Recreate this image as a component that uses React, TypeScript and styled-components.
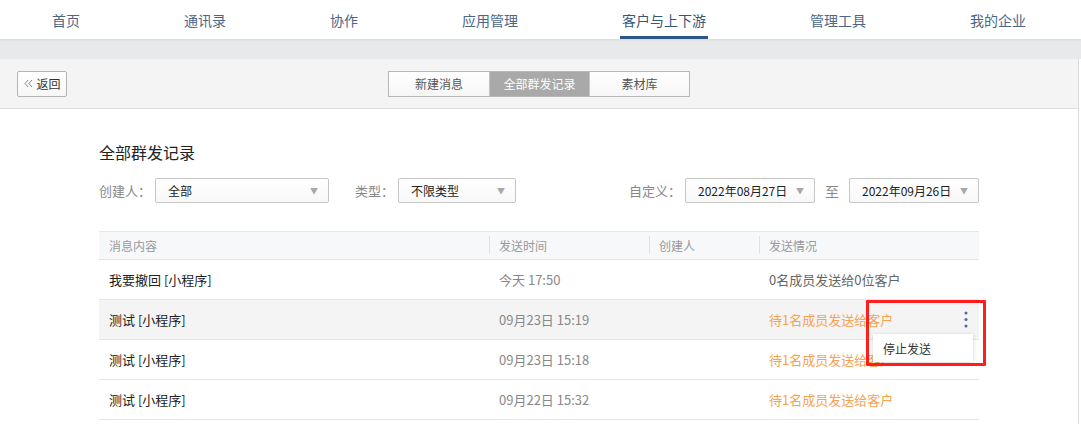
import React from "react";
import styled, { createGlobalStyle } from "styled-components";

const GlobalStyle = createGlobalStyle`
  html, body { margin: 0; padding: 0; background: #fff; }
  body {
    font-family: "Microsoft YaHei", "Noto Sans CJK SC", "Noto Sans", sans-serif;
    color: #333;
    -webkit-font-smoothing: antialiased;
  }
  * { box-sizing: border-box; }
`;

const NavBar = styled.nav`
  display: flex;
  height: 39px;
  padding-left: 50px;
  gap: 100px;
  background: #fff;
  position: relative;
  z-index: 1;
  box-shadow: 0 1px 2px rgba(0, 0, 0, 0.08);
`;

const NavItem = styled.div<{ $active?: boolean }>`
  height: 39px;
  padding: 3px 2px 0;
  display: flex;
  align-items: center;
  font-size: 14px;
  color: ${(p) => (p.$active ? "#35557d" : "#4b6689")};
  border-bottom: 3px solid ${(p) => (p.$active ? "#2c5887" : "transparent")};
  white-space: nowrap;
`;

const GrayBand = styled.div`
  height: 20px;
  background: #e8e9eb;
`;

const Card = styled.div`
  width: 1079px;
  border-right: 1px solid #dcdcdc;
  background: #fff;
  min-height: 365px;
`;

const CardHeader = styled.div`
  height: 50px;
  display: grid;
  grid-template-columns: 1fr auto 1fr;
  align-items: center;
  padding: 0 17px;
  background: #f4f4f4;
  border-bottom: 1px solid #e0e0e0;
`;

const BackButton = styled.button`
  justify-self: start;
  width: 50px;
  height: 26px;
  display: flex;
  align-items: center;
  justify-content: center;
  gap: 3px;
  padding: 0 0 0 1px;
  border: 1px solid #b4b4b4;
  border-radius: 2px;
  background: linear-gradient(#ffffff, #f7f7f7);
  font-family: inherit;
  font-size: 12px;
  color: #333;
`;

const Tabs = styled.div`
  display: flex;
  border: 1px solid #b8b8b8;
  height: 26px;
`;

const Tab = styled.div<{ $active?: boolean; $sep?: boolean }>`
  width: 100px;
  height: 24px;
  display: flex;
  align-items: center;
  justify-content: center;
  font-size: 12px;
  color: ${(p) => (p.$active ? "#fff" : "#555")};
  background: ${(p) => (p.$active ? "#a9a9a9" : "linear-gradient(#ffffff, #f6f6f6)")};
  border-left: ${(p) => (p.$sep ? "1px solid #c4c4c4" : "none")};
`;

const Body = styled.div`
  padding: 32px 0 0 99px;
`;

const Title = styled.h2`
  margin: 0;
  font-size: 16px;
  line-height: 22px;
  font-weight: normal;
  color: #222;
`;

const FilterRow = styled.div`
  width: 880px;
  margin-top: 15px;
  display: flex;
  align-items: center;
  height: 25px;
`;

const FilterGroup = styled.div<{ $push?: boolean; $gapLeft?: number }>`
  display: flex;
  align-items: center;
  margin-left: ${(p) => (p.$push ? "auto" : `${p.$gapLeft ?? 0}px`)};
`;

const Label = styled.span`
  font-size: 13px;
  color: #888;
  margin-right: 4px;
  white-space: nowrap;
`;

const To = styled.span`
  font-size: 14px;
  color: #888;
  margin: 0 10px;
`;

const Select = styled.div<{ $w: number }>`
  width: ${(p) => p.$w}px;
  height: 25px;
  display: flex;
  align-items: center;
  padding: 0 10px 0 12px;
  border: 1px solid #c6c6c6;
  border-radius: 2px;
  background: linear-gradient(#ffffff, #f8f8f8);
  font-size: 12px;
  color: #222;
  white-space: nowrap;
`;

const Arrow = styled.span`
  margin-left: auto;
  font-size: 8px;
  color: #a8a8a8;
`;

const Table = styled.div`
  width: 880px;
  margin-top: 28px;
  border-top: 1px solid #e6e6e6;
`;

const HeadRow = styled.div`
  display: grid;
  grid-template-columns: 390px 160px 110px 220px;
  height: 28px;
  background: #f7f8fa;
  border-bottom: 1px solid #e4e4e4;
`;

const HeadCell = styled.div<{ $sep?: boolean }>`
  position: relative;
  display: flex;
  align-items: center;
  padding-left: 10px;
  font-size: 12px;
  color: #999;
  &::before {
    content: "";
    display: ${(p) => (p.$sep ? "block" : "none")};
    position: absolute;
    left: 0;
    top: 4px;
    bottom: 5px;
    width: 1px;
    background: #e2e2e2;
  }
`;

const Row = styled.div<{ $hover?: boolean }>`
  display: grid;
  grid-template-columns: 390px 160px 110px 220px;
  height: 40px;
  border-bottom: 1px solid #e6e6e6;
  background: ${(p) => (p.$hover ? "#f4f4f4" : "#fff")};
  position: relative;
  z-index: ${(p) => (p.$hover ? 2 : 1)};
`;

const Cell = styled.div<{ $tone?: "main" | "muted" | "plain" | "warn" }>`
  position: relative;
  display: flex;
  align-items: center;
  padding-left: 10px;
  font-size: 13px;
  white-space: nowrap;
  color: ${(p) =>
    p.$tone === "muted"
      ? "#888"
      : p.$tone === "plain"
      ? "#666"
      : p.$tone === "warn"
      ? "#f7a24e"
      : "#222"};
`;

const MoreButton = styled.span`
  margin-left: auto;
  margin-right: 11px;
  display: flex;
  align-items: center;
`;

const Menu = styled.div`
  position: absolute;
  left: 114px;
  top: 34px;
  width: 100px;
  height: 28px;
  display: flex;
  align-items: center;
  padding-left: 10px;
  background: #fff;
  font-size: 12px;
  color: #333;
  box-shadow: 0 1px 4px rgba(0, 0, 0, 0.18);
  z-index: 3;
`;

const Highlight = styled.div`
  position: absolute;
  left: 107px;
  top: 0;
  width: 120px;
  height: 66px;
  border: 3px solid #ff1d1d;
  border-radius: 1px;
  pointer-events: none;
  z-index: 4;
`;

const Chevrons = () => (
  <svg width="9" height="9" viewBox="0 0 9 9" fill="none" stroke="#777" strokeWidth="0.9">
    <polyline points="4.2,1 1,4.5 4.2,8" />
    <polyline points="8,1 4.8,4.5 8,8" />
  </svg>
);

const Dots = () => (
  <svg width="4" height="17" viewBox="0 0 4 17" fill="#3f6ea6">
    <circle cx="2" cy="2" r="1.5" />
    <circle cx="2" cy="8.5" r="1.5" />
    <circle cx="2" cy="15" r="1.5" />
  </svg>
);

const navItems = ["首页", "通讯录", "协作", "应用管理", "客户与上下游", "管理工具", "我的企业"];

type Rec = { content: string; time: string; status: string; pending: boolean; hover?: boolean };
const records: Rec[] = [
  { content: "我要撤回 [小程序]", time: "今天 17:50", status: "0名成员发送给0位客户", pending: false },
  { content: "测试 [小程序]", time: "09月23日 15:19", status: "待1名成员发送给客户", pending: true, hover: true },
  { content: "测试 [小程序]", time: "09月23日 15:18", status: "待1名成员发送给客户", pending: true },
  { content: "测试 [小程序]", time: "09月22日 15:32", status: "待1名成员发送给客户", pending: true },
];

export default function App() {
  return (
    <>
      <GlobalStyle />
      <NavBar>
        {navItems.map((n) => (
          <NavItem key={n} $active={n === "客户与上下游"}>
            {n}
          </NavItem>
        ))}
      </NavBar>
      <GrayBand />
      <Card>
        <CardHeader>
          <BackButton>
            <Chevrons />
            返回
          </BackButton>
          <Tabs>
            <Tab>新建消息</Tab>
            <Tab $active $sep>
              全部群发记录
            </Tab>
            <Tab $sep>素材库</Tab>
          </Tabs>
          <div />
        </CardHeader>
        <Body>
          <Title>全部群发记录</Title>
          <FilterRow>
            <FilterGroup>
              <Label>创建人：</Label>
              <Select $w={174}>
                全部<Arrow>▼</Arrow>
              </Select>
            </FilterGroup>
            <FilterGroup $gapLeft={26}>
              <Label>类型：</Label>
              <Select $w={118}>
                不限类型<Arrow>▼</Arrow>
              </Select>
            </FilterGroup>
            <FilterGroup $push>
              <Label>自定义：</Label>
              <Select $w={130}>
                2022年08月27日<Arrow>▼</Arrow>
              </Select>
              <To>至</To>
              <Select $w={130}>
                2022年09月26日<Arrow>▼</Arrow>
              </Select>
            </FilterGroup>
          </FilterRow>
          <Table>
            <HeadRow>
              <HeadCell>消息内容</HeadCell>
              <HeadCell $sep>发送时间</HeadCell>
              <HeadCell $sep>创建人</HeadCell>
              <HeadCell $sep>发送情况</HeadCell>
            </HeadRow>
            {records.map((r, i) => (
              <Row key={i} $hover={r.hover}>
                <Cell $tone="main">{r.content}</Cell>
                <Cell $tone="muted">{r.time}</Cell>
                <Cell />
                <Cell $tone={r.pending ? "warn" : "plain"}>
                  {r.status}
                  {r.hover && (
                    <>
                      <MoreButton>
                        <Dots />
                      </MoreButton>
                      <Menu>停止发送</Menu>
                      <Highlight />
                    </>
                  )}
                </Cell>
              </Row>
            ))}
          </Table>
        </Body>
      </Card>
    </>
  );
}
